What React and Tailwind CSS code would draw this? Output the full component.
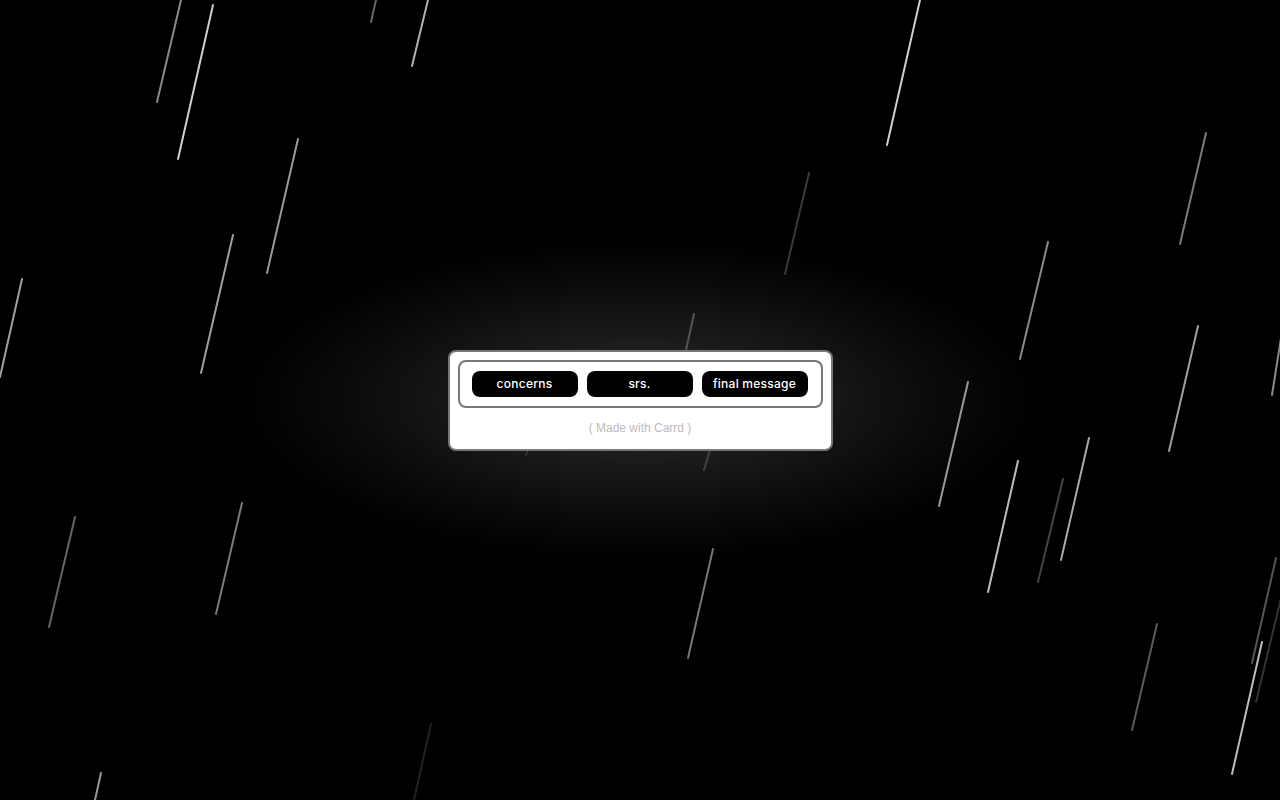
import React from 'react';

// rain streaks: [x1, y1, x2, y2, colour]
const drops = [
  [181, 0, 157, 102, '#8a8a8a'],
  [213, 5, 178, 159, '#cfcfcf'],
  [376, 0, 371, 22, '#666'],
  [428, 0, 412, 66, '#b0b0b0'],
  [298, 139, 267, 273, '#9a9a9a'],
  [233, 235, 201, 373, '#a0a0a0'],
  [22, 279, 0, 377, '#a0a0a0'],
  [920, 0, 887, 145, '#cfcfcf'],
  [809, 173, 785, 274, '#3a3a3a'],
  [694, 314, 686, 350, '#555'],
  [710, 450, 704, 470, '#444'],
  [528, 450, 526, 455, '#333'],
  [1206, 133, 1180, 244, '#7a7a7a'],
  [1048, 242, 1020, 359, '#8a8a8a'],
  [1198, 326, 1169, 451, '#a0a0a0'],
  [1281, 338, 1272, 395, '#8a8a8a'],
  [968, 382, 939, 506, '#9a9a9a'],
  [1018, 461, 988, 592, '#bdbdbd'],
  [1063, 479, 1038, 582, '#444'],
  [1089, 438, 1061, 560, '#aaaaaa'],
  [1276, 558, 1252, 663, '#555'],
  [1281, 598, 1256, 702, '#333'],
  [1262, 642, 1232, 774, '#bdbdbd'],
  [1157, 624, 1132, 730, '#5a5a5a'],
  [713, 549, 688, 658, '#777'],
  [242, 503, 216, 614, '#7a7a7a'],
  [75, 517, 49, 627, '#666'],
  [101, 773, 95, 800, '#9a9a9a'],
  [431, 724, 414, 800, '#222'],
];

function Rain() {
  return (
    <svg className="absolute inset-0 h-full w-full" viewBox="0 0 1280 800" preserveAspectRatio="none">
      {drops.map(([x1, y1, x2, y2, c], i) => (
        <line key={i} x1={x1} y1={y1} x2={x2} y2={y2} stroke={c} strokeWidth="2" strokeLinecap="round" />
      ))}
    </svg>
  );
}

export default function App() {
  const links = ['concerns', 'srs.', 'final message'];

  return (
    <div className="relative flex h-screen w-full items-center justify-center overflow-hidden bg-[radial-gradient(ellipse_400px_160px_at_50%_50%,#303030_0%,#1a1a1a_40%,#0a0a0a_75%,#000_100%)]">
      <Rain />
      <div className="relative z-10 flex h-[101px] w-[385px] flex-col rounded-[8px] border-2 border-[#777] bg-white p-[8px]">
        <div className="flex gap-[9px] rounded-[8px] border-2 border-[#777] px-[12px] py-[9px]">
          {links.map((label) => (
            <a
              key={label}
              href="#"
              className="flex h-[26px] w-[106px] items-center justify-center rounded-[8px] bg-black text-[12px] font-medium tracking-[0.02em] text-white"
              style={{ fontFamily: 'Inter, "Open Sans", sans-serif' }}
            >
              {label}
            </a>
          ))}
        </div>
        <p className="pt-[12px] text-center text-[12px] leading-[16px] text-[#bbb]" style={{ fontFamily: '"Liberation Sans", Arial, sans-serif' }}>
          ( Made with Carrd )
        </p>
      </div>
    </div>
  );
}
